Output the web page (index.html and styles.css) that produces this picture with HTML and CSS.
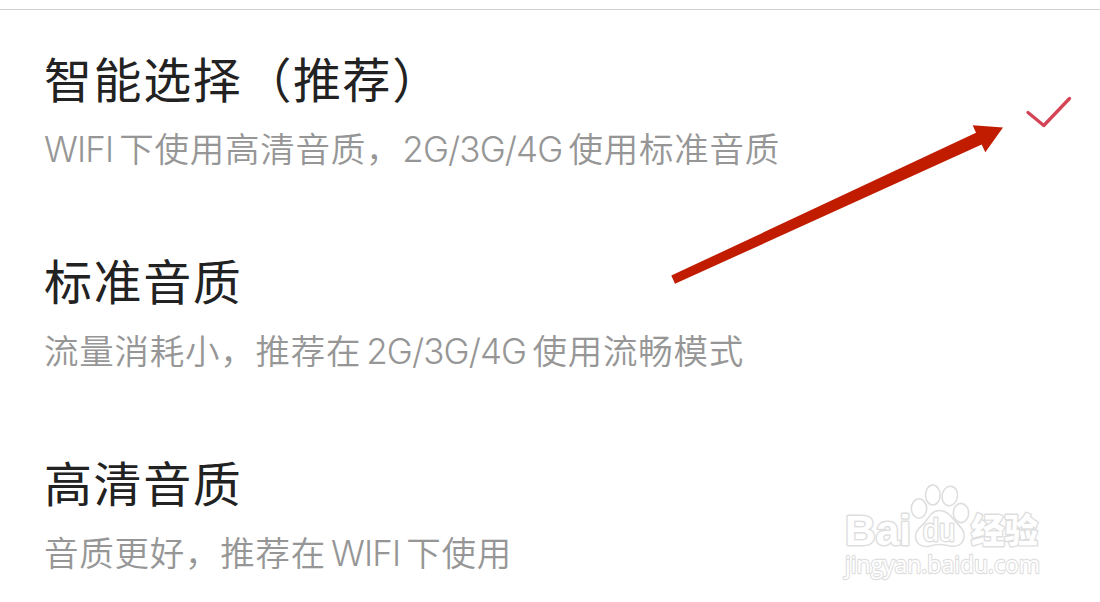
FILE: index.html
```
<!DOCTYPE html>
<html lang="zh-CN">
<head><meta charset="utf-8"><title>音质选择</title><link rel="stylesheet" href="styles.css"></head>
<body>
<main class="options">
<section class="option"><h2 class="title">智能选择<span class="paren">（</span>推荐<span class="paren-end">）</span></h2><p class="desc"><span class="latin first">WIFI</span>下使用高清音质，<span class="latin after-comma">2G/3G/4G</span>使用标准音质</p></section>
<section class="option"><h2 class="title">标准音质</h2><p class="desc">流量消耗小，推荐在<span class="latin">2G/3G/4G</span>使用流畅模式</p></section>
<section class="option"><h2 class="title">高清音质</h2><p class="desc">音质更好，推荐在<span class="latin">WIFI</span>下使用</p></section>
</main>
<svg class="overlay" viewBox="0 0 1100 602" aria-hidden="true">
<path class="check" d="M1028 112.5L1043.8 125.5L1069.5 98.5"/>
<path class="arrow" d="M671.3 275.6L976 132.8L972.7 125.3L1003 127.5L985.3 152.3L981.7 144.5L675 283.8Z"/>
<g class="watermark">
<text class="brand" x="845" y="545" textLength="66" lengthAdjust="spacingAndGlyphs">Bai</text>
<ellipse cx="919" cy="508.5" rx="7.7" ry="9.7"/>
<ellipse cx="932.8" cy="495" rx="7.3" ry="10"/>
<ellipse cx="949.8" cy="496" rx="7.7" ry="9.8" transform="rotate(10 949.8 496)"/>
<ellipse cx="961" cy="513" rx="7.7" ry="9.6"/>
<path d="M939.5 510.5C947 510.5 951 516 955 521C960 527 965 530 964 537C963 545 957 547 950 546C943 544 936 544 930 546C922 548 916 544 915.5 537C915 529 922 527 926 521C930 515 933 510.5 939.5 510.5Z"/>
<text class="du" x="923" y="541" textLength="32" lengthAdjust="spacingAndGlyphs">du</text>
<text class="experience" x="971" y="543" textLength="67" lengthAdjust="spacingAndGlyphs">经验</text>
<text class="url" x="845" y="572.5" textLength="195" lengthAdjust="spacingAndGlyphs">jingyan.baidu.com</text>
</g>
</svg>
</body></html>
```
FILE: styles.css
```
body{display:flow-root;margin:0;background:#fff;height:602px;overflow:hidden;font-family:"Noto Sans CJK SC",sans-serif}
.options{box-sizing:border-box;height:593px;overflow:hidden;border-top:1px solid #d0d0d0;margin-top:9px;padding:31px 0 0 44px}
.option{height:202px;white-space:nowrap}
.option:last-child{height:auto}
.title{margin:0;font-size:48px;letter-spacing:1.6px;line-height:72px;font-weight:400;color:#222}
.paren{margin-left:1px}
.paren-end{margin-left:0}
.desc{margin:0;font-weight:350;font-size:34.5px;letter-spacing:.75px;line-height:68px;color:#969696}
.latin{font-family:Inter,sans-serif;font-weight:350;font-size:35px;letter-spacing:-.9px;margin:0 6.2px 0 5px}
.first{margin-left:0}
.after-comma{margin-left:1px}
.overlay{position:absolute;inset:0;width:1100px;height:602px;pointer-events:none}
.check{fill:none;stroke:#d44456;stroke-width:3.3;stroke-linecap:round;stroke-linejoin:round}
.arrow{fill:#c11b00}
.watermark{fill:#fff;stroke:#dedede;stroke-width:1.6;stroke-linejoin:round}
.watermark text{paint-order:stroke;stroke-width:2.8}
.watermark .brand{font:700 43px "Liberation Sans",sans-serif;stroke-width:3}
.watermark .du{font:400 31px "Liberation Sans",sans-serif}
.watermark .experience{font:900 34px "Noto Sans CJK SC",sans-serif}
.watermark .url{font:400 24px "Open Sans",sans-serif;stroke-width:2.3}
```
